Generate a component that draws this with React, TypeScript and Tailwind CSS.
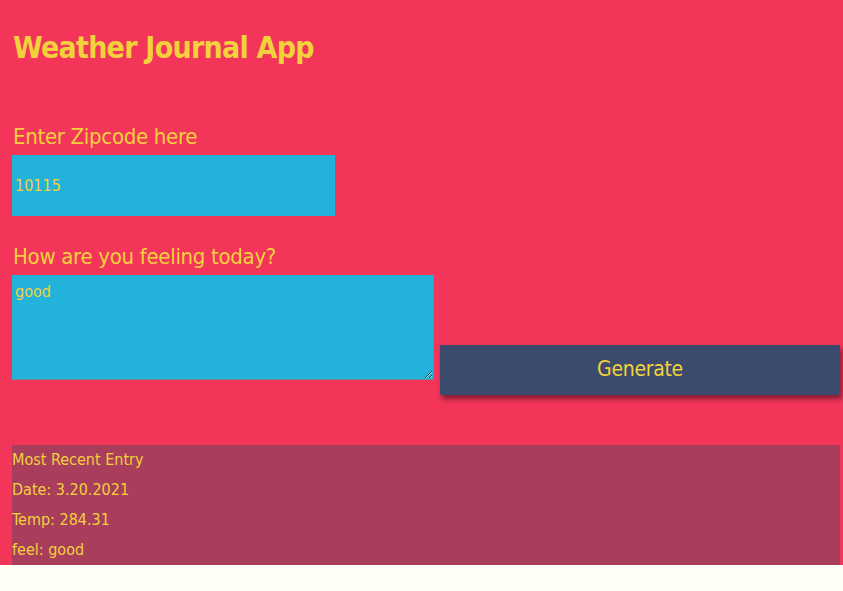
export default function App() {
  const font = { fontFamily: '"DejaVu Sans Condensed", "DejaVu Sans", sans-serif' };
  return (
    <div className="min-h-[591px] w-[843px] bg-[#fffff7]" style={font}>
      <div className="bg-[#f23559] pl-3 pr-[3px] text-[#f2d13c]">
        <h1 className="h-[118px] pt-5 pl-px text-[30px] font-bold leading-[55px] tracking-[-0.75px]">
          Weather Journal App
        </h1>

        <label htmlFor="zip" className="block h-[37px] pl-px text-[22px] leading-[37px] tracking-[-0.3px]">
          Enter Zipcode here
        </label>
        <input
          id="zip"
          type="text"
          defaultValue="10115"
          className="block h-[61px] w-[323px] border-0 bg-[#23b2da] px-[3px] text-[16px] text-[#f2d13c] outline-none"
          style={font}
        />

        <label htmlFor="feelings" className="mt-[22px] block h-[37px] pl-px text-[22px] leading-[37px] tracking-[-0.3px]">
          How are you feeling today?
        </label>
        <div className="flex items-start">
          <textarea
            id="feelings"
            defaultValue="good"
            className="block h-[105px] w-[422px] border-0 border-b border-r border-[#6f8a93] bg-[#23b2da] px-[3px] py-[5px] text-[16px] text-[#f2d13c] outline-none"
            style={font}
          />
          <button
            type="button"
            className="ml-[6px] mt-[70px] h-[50px] w-[400px] bg-[#3c4b6d] text-[21px] tracking-[-0.3px] text-[#f2d13c] shadow-[2px_4px_5px_rgba(0,0,0,0.45)]"
            style={font}
          >
            Generate
          </button>
        </div>

        <div className="mt-[50px] bg-[#a83d5c] text-[16px] leading-[30px]">
          <div>Most Recent Entry</div>
          <div>Date: 3.20.2021</div>
          <div>Temp: 284.31</div>
          <div>feel: good</div>
        </div>
      </div>
    </div>
  );
}
